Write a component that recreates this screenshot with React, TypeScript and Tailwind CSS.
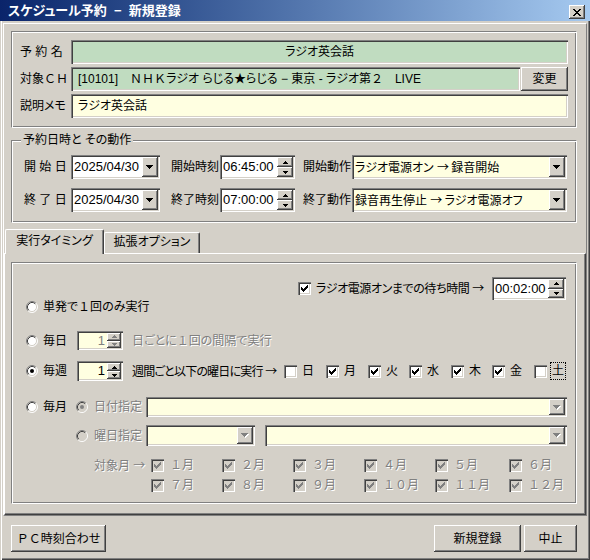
import React from "react";

const SUNKEN =
  "shadow-[inset_1px_1px_0_#808080,inset_2px_2px_0_#404040,inset_-1px_-1px_0_#ffffff,inset_-2px_-2px_0_#d4d0c8]";
const RAISED =
  "shadow-[inset_-1px_-1px_0_#404040,inset_1px_1px_0_#ffffff,inset_-2px_-2px_0_#808080,inset_2px_2px_0_#d4d0c8]";
const ETCH =
  "border border-t-[#808080] border-l-[#808080] border-r-white border-b-white shadow-[inset_1px_1px_0_#ffffff,inset_-1px_-1px_0_#808080]";
const JP = "text-[12px] whitespace-nowrap";
const DIS = "text-[#808080] [text-shadow:1px_1px_0_#ffffff]";
const NUM = "text-[13px] whitespace-nowrap";

const ARROW7 = "M0 0h7v1H6v1H5v1H4v1H3V3H2V2H1V1H0z";
const UP5 = "M2 0h1v1h1v1h1v1H0V2h1V1h1z";
const DOWN5 = "M0 0h5v1H4v1H3v1H2V2H1V1H0z";
const CHECK =
  "M6 0h1v1H6z M5 1h2v1H5z M0 2h1v1H0z M4 2h3v1H4z M0 3h2v1H0z M3 3h3v1H3z M0 4h5v1H0z M1 5h3v1H1z M2 6h1v1H2z";
const XPATH =
  "M0 0h2v1H0z M6 0h2v1H6z M1 1h2v1H1z M5 1h2v1H5z M2 2h4v1H2z M3 3h2v1H3z M2 4h4v1H2z M1 5h2v1H1z M5 5h2v1H5z M0 6h2v1H0z M6 6h2v1H6z";

function W({ children }: { children: React.ReactNode }) {
  return <span className="[font-feature-settings:normal]">{children}</span>;
}

function Ar() {
  return (
    <span className="font-['Noto_Sans_CJK_JP',sans-serif] [font-feature-settings:normal] tracking-normal inline-block w-[11px] text-center">
      →
    </span>
  );
}

function Arrow7({ disabled }: { disabled?: boolean }) {
  return (
    <svg width="8" height="5" viewBox="0 0 8 5" shapeRendering="crispEdges">
      {disabled && <path transform="translate(1 1)" d={ARROW7} fill="#ffffff" />}
      <path d={ARROW7} fill={disabled ? "#808080" : "#000000"} />
    </svg>
  );
}

function Small({ up, disabled }: { up?: boolean; disabled?: boolean }) {
  return (
    <svg width="5" height="3" viewBox="0 0 5 3" shapeRendering="crispEdges">
      <path d={up ? UP5 : DOWN5} fill={disabled ? "#808080" : "#000000"} />
    </svg>
  );
}

function Radio({ checked, disabled }: { checked?: boolean; disabled?: boolean }) {
  return (
    <svg width="12" height="12" viewBox="0 0 12 12" className="shrink-0">
      <circle cx="6" cy="6" r="5" fill={disabled ? "#d4d0c8" : "#ffffff"} />
      <path d="M2.11 9.89A5.5 5.5 0 0 1 9.89 2.11" stroke="#808080" fill="none" />
      <path d="M9.89 2.11A5.5 5.5 0 0 1 2.11 9.89" stroke="#ffffff" fill="none" />
      <path d="M2.82 9.18A4.5 4.5 0 0 1 9.18 2.82" stroke="#404040" fill="none" />
      <path d="M9.18 2.82A4.5 4.5 0 0 1 2.82 9.18" stroke="#d4d0c8" fill="none" />
      {checked && <circle cx="6" cy="6" r="2" fill={disabled ? "#808080" : "#000000"} />}
    </svg>
  );
}

function Check({ checked, disabled }: { checked?: boolean; disabled?: boolean }) {
  return (
    <div
      className={`w-[13px] h-[13px] shrink-0 ${SUNKEN} ${
        disabled ? "bg-[#d4d0c8]" : "bg-white"
      } flex items-center justify-center`}
    >
      {checked && (
        <svg width="7" height="7" viewBox="0 0 7 7" shapeRendering="crispEdges">
          <path d={CHECK} fill={disabled ? "#808080" : "#000000"} />
        </svg>
      )}
    </div>
  );
}

function Btn({ cls, children }: { cls: string; children: React.ReactNode }) {
  return (
    <div className={`${cls} bg-[#d4d0c8] ${RAISED} flex items-center justify-center ${JP}`}>
      {children}
    </div>
  );
}

function Combo({
  cls,
  bg,
  disabled,
  children,
}: {
  cls: string;
  bg: string;
  disabled?: boolean;
  children?: React.ReactNode;
}) {
  return (
    <div className={`${cls} h-full shrink-0 ${SUNKEN} ${bg} p-[2px] flex`}>
      <div className="flex-1 flex items-center pl-[1px] overflow-hidden">{children}</div>
      <div className={`w-[16px] bg-[#d4d0c8] ${RAISED} flex items-center justify-center`}>
        <Arrow7 disabled={disabled} />
      </div>
    </div>
  );
}

function Spin({
  cls,
  bg,
  disabled,
  right,
  bw,
  children,
}: {
  cls: string;
  bg: string;
  disabled?: boolean;
  right?: boolean;
  bw: string;
  children?: React.ReactNode;
}) {
  return (
    <div className={`${cls} h-full shrink-0 ${SUNKEN} ${bg} p-[2px] flex`}>
      <div
        className={`flex-1 flex items-center ${right ? "justify-end pr-[2px]" : "pl-[1px]"} overflow-hidden`}
      >
        {children}
      </div>
      <div className={`${bw} flex flex-col`}>
        <div className={`flex-1 bg-[#d4d0c8] ${RAISED} flex items-center justify-center`}>
          <Small up disabled={disabled} />
        </div>
        <div className={`flex-1 bg-[#d4d0c8] ${RAISED} flex items-center justify-center`}>
          <Small disabled={disabled} />
        </div>
      </div>
    </div>
  );
}

function DTRow({
  label,
  tl,
  time,
  al,
  action,
}: {
  label: string;
  tl: string;
  time: string;
  al: string;
  action: React.ReactNode;
}) {
  return (
    <div className="flex h-[24px] items-center">
      <span className={`w-[47px] ${JP}`}>{label}</span>
      <Combo cls="w-[89px]" bg="bg-white">
        <span className={NUM}>2025/04/30</span>
      </Combo>
      <span className={`ml-[11px] w-[49px] ${JP}`}>{tl}</span>
      <Spin cls="w-[75px]" bg="bg-white" bw="w-[16px]">
        <span className={NUM}>{time}</span>
      </Spin>
      <span className={`ml-[8px] w-[49px] ${JP}`}>{al}</span>
      <Combo cls="w-[215px]" bg="bg-[#ffffe1]">
        <span className={JP}>{action}</span>
      </Combo>
    </div>
  );
}

function Day({ label, checked, w, focus }: { label: string; checked?: boolean; w: string; focus?: boolean }) {
  return (
    <div className={`${w} shrink-0 flex items-center`}>
      <Check checked={checked} />
      {focus ? (
        <span className={`ml-[3px] border border-dotted border-black px-[1px] leading-[16px] ${JP}`}>
          {label}
        </span>
      ) : (
        <span className={`ml-[5px] ${JP}`}>{label}</span>
      )}
    </div>
  );
}

function Month({ label, w }: { label: string; w: string }) {
  return (
    <div className={`${w} shrink-0 flex items-center`}>
      <Check checked disabled />
      <span className={`ml-[6px] ${JP} ${DIS} [font-feature-settings:normal]`}>{label}</span>
    </div>
  );
}

export default function App() {
  return (
    <div className="w-[590px] h-[560px] bg-[#d4d0c8] flex flex-col overflow-hidden text-black font-['Liberation_Sans','Noto_Sans_CJK_JP',sans-serif] [font-feature-settings:'palt'] shadow-[inset_1px_0_0_#d4d0c8,inset_2px_0_0_#ffffff,inset_-1px_-1px_0_#404040,inset_-2px_-2px_0_#808080]">
      {/* Title bar */}
      <div className="h-[21px] shrink-0 flex items-start justify-between bg-linear-to-r from-[#0a246a] to-[#a6caf0] pl-[8px] pr-[5px]">
        <span className="text-white font-bold text-[13px] leading-[21px] whitespace-nowrap">
          スケジュール予約 &nbsp;−&nbsp; 新規登録
        </span>
        <div className={`mt-[5px] w-[16px] h-[14px] bg-[#d4d0c8] ${RAISED} flex items-center justify-center`}>
          <svg width="8" height="7" viewBox="0 0 8 7" shapeRendering="crispEdges">
            <path d={XPATH} fill="#000000" />
          </svg>
        </div>
      </div>

      {/* Main panel */}
      <div className="mt-[2px] ml-[3px] w-[584px] h-[493px] shrink-0 border border-t-white border-l-white border-r-[#808080] border-b-[#808080] flex flex-col">
        {/* Group 1 */}
        <div className={`mt-[7px] ml-[7px] w-[566px] h-[97px] shrink-0 ${ETCH} pt-[8px] px-[8px] flex flex-col gap-[3px]`}>
          <div className="flex h-[24px] items-center">
            <span className={`w-[51px] ${JP}`}>予 約 名</span>
            <div className={`flex-1 h-full ${SUNKEN} bg-[#c0dcc0] flex items-center justify-center ${JP}`}>
              ラジオ英会話
            </div>
          </div>
          <div className="flex h-[24px] items-center">
            <span className={`w-[51px] ${JP}`}>
              対象<W>ＣＨ</W>
            </span>
            <div className={`flex-1 h-full ${SUNKEN} bg-[#c0dcc0] flex items-center pl-[7px] ${JP}`}>
              [10101]　<W>ＮＨＫ</W>ラジオ らじる<W>★</W>らじる − 東京 - ラジオ第<W>２</W>　LIVE
            </div>
            <Btn cls="w-[47px] h-full ml-[1px]">変更</Btn>
          </div>
          <div className="flex h-[24px] items-center">
            <span className={`w-[51px] ${JP}`}>説明メモ</span>
            <div className={`flex-1 h-full ${SUNKEN} bg-[#ffffe1] flex items-center pl-[7px] ${JP}`}>
              ラジオ英会話
            </div>
          </div>
        </div>

        {/* Group 2 */}
        <div className={`relative mt-[12px] ml-[7px] w-[566px] h-[83px] shrink-0 ${ETCH} pt-[14px] pl-[12px] flex flex-col gap-[9px]`}>
          <span className={`absolute -top-[8px] left-[9px] px-[2px] bg-[#d4d0c8] leading-[14px] ${JP}`}>
            予約日時と その動作
          </span>
          <DTRow
            label="開 始 日"
            tl="開始時刻"
            time="06:45:00"
            al="開始動作"
            action={
              <>
                ラジオ電源オン <Ar /> 録音開始
              </>
            }
          />
          <DTRow
            label="終 了 日"
            tl="終了時刻"
            time="07:00:00"
            al="終了動作"
            action={
              <>
                録音再生停止 <Ar /> ラジオ電源オフ
              </>
            }
          />
        </div>

        {/* Tabs */}
        <div className="mt-[6px] h-[24px] shrink-0 flex items-end pl-[1px]">
          <div className="relative z-10 w-[99px] h-[25px] -mb-[1px] bg-[#d4d0c8] border-t border-l border-r border-t-white border-l-white border-r-[#404040] rounded-t-[2px] shadow-[inset_-1px_0_0_#808080] flex items-center justify-center pb-[2px]">
            <span className={JP}>実行タイミング</span>
          </div>
          <div className="w-[96px] h-[21px] bg-[#d4d0c8] border-t border-l border-r border-t-white border-l-white border-r-[#404040] rounded-t-[2px] shadow-[inset_-1px_0_0_#808080] flex items-center justify-center pb-[2px]">
            <span className={JP}>拡張オプション</span>
          </div>
        </div>

        {/* Tab panel */}
        <div className="flex-1 border border-t-white border-l-white border-r-[#404040] border-b-[#404040] shadow-[inset_-1px_-1px_0_#808080] pt-[8px] pl-[6px]">
          <div className={`w-[566px] h-[242px] ${ETCH} flex flex-col`}>
            {/* Row A */}
            <div className="mt-[14px] h-[23px] flex items-center pl-[286px]">
              <Check checked />
              <span className={`ml-[5px] w-[176px] tracking-[-0.4px] ${JP}`}>
                ラジオ電源オンまでの待ち時間 <Ar />
              </span>
              <Spin cls="w-[74px]" bg="bg-white" bw="w-[16px]">
                <span className={NUM}>00:02:00</span>
              </Spin>
            </div>
            {/* Row B */}
            <div className="h-[13px] flex items-center pl-[14px]">
              <Radio />
              <span className={`ml-[5px] ${JP}`}>
                単発で<W>１</W>回のみ実行
              </span>
            </div>
            {/* Row C */}
            <div className="mt-[18px] h-[19px] flex items-center pl-[14px]">
              <Radio />
              <span className={`ml-[5px] w-[34px] ${JP}`}>毎日</span>
              <Spin cls="w-[46px]" bg="bg-[#ffffe1]" bw="w-[14px]" right disabled>
                <span className={`${NUM} text-[#808080]`}>1</span>
              </Spin>
              <span className={`ml-[9px] ${JP} ${DIS}`}>
                日ごとに<W>１</W>回の間隔で実行
              </span>
            </div>
            {/* Row D */}
            <div className="mt-[11px] h-[20px] flex items-center pl-[14px]">
              <Radio checked />
              <span className={`ml-[5px] w-[34px] ${JP}`}>毎週</span>
              <Spin cls="w-[46px]" bg="bg-[#ffffe1]" bw="w-[14px]" right>
                <span className={NUM}>1</span>
              </Spin>
              <span className={`ml-[9px] w-[152px] tracking-[-0.8px] ${JP}`}>
                週間ごと以下の曜日に実行 <Ar />
              </span>
              <Day label="日" w="w-[42px]" />
              <Day label="月" w="w-[42px]" checked />
              <Day label="火" w="w-[41px]" checked />
              <Day label="水" w="w-[42px]" checked />
              <Day label="木" w="w-[41px]" checked />
              <Day label="金" w="w-[42px]" checked />
              <Day label="土" w="w-[34px]" focus />
            </div>
            {/* Row E */}
            <div className="mt-[16px] h-[20px] flex items-center pl-[14px]">
              <Radio />
              <span className={`ml-[5px] w-[33px] ${JP}`}>毎月</span>
              <Radio checked disabled />
              <span className={`ml-[6px] w-[52px] ${JP} ${DIS}`}>日付指定</span>
              <Combo cls="w-[421px]" bg="bg-[#ffffe1]" disabled />
            </div>
            {/* Row F */}
            <div className="mt-[8px] h-[21px] flex items-center pl-[64px]">
              <Radio disabled />
              <span className={`ml-[6px] w-[52px] ${JP} ${DIS}`}>曜日指定</span>
              <Combo cls="w-[109px]" bg="bg-[#ffffe1]" disabled />
              <Combo cls="w-[302px] ml-[10px]" bg="bg-[#ffffe1]" disabled />
            </div>
            {/* Row G */}
            <div className="mt-[12px] h-[14px] flex items-center pl-[82px]">
              <span className={`w-[57px] ${JP} ${DIS}`}>
                対象月 <Ar />
              </span>
              <Month label="１月" w="w-[71px]" />
              <Month label="２月" w="w-[71px]" />
              <Month label="３月" w="w-[71px]" />
              <Month label="４月" w="w-[71px]" />
              <Month label="５月" w="w-[74px]" />
              <Month label="６月" w="w-[60px]" />
            </div>
            {/* Row H */}
            <div className="mt-[6px] h-[14px] flex items-center pl-[139px]">
              <Month label="７月" w="w-[71px]" />
              <Month label="８月" w="w-[71px]" />
              <Month label="９月" w="w-[71px]" />
              <Month label="１０月" w="w-[71px]" />
              <Month label="１１月" w="w-[74px]" />
              <Month label="１２月" w="w-[60px]" />
            </div>
          </div>
        </div>
      </div>

      {/* Bottom buttons */}
      <div className="mt-[9px] h-[27px] shrink-0 flex pl-[11px] pr-[13px]">
        <Btn cls="w-[95px] h-full">
          <W>ＰＣ</W>時刻合わせ
        </Btn>
        <div className="flex-1" />
        <Btn cls="w-[87px] h-full">新規登録</Btn>
        <Btn cls="w-[53px] h-full ml-[3px]">中止</Btn>
      </div>
    </div>
  );
}
